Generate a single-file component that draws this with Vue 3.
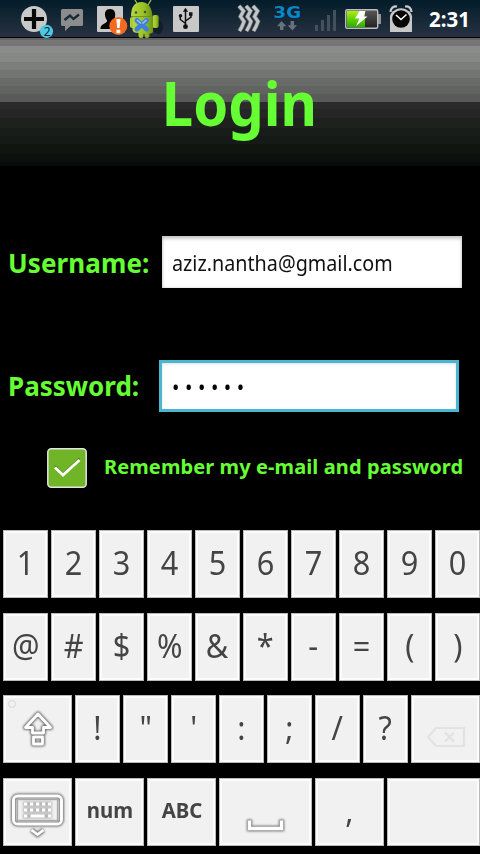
<script setup>
import { ref } from 'vue'

const username = ref('aziz.nantha@gmail.com')
const password = ref('••••••')
const remember = ref(true)

const digits = '1234567890'.split('')
const symbols = ['@', '#', '$', '%', '&', '*', '-', '=', '(', ')']
const punctuation = ['!', '"', "'", ':', ';', '/', '?']
</script>

<template>
  <main class="screen">
    <header class="status">
      <svg class="i-plus" width="34" height="38" viewBox="20 0 34 38">
        <circle cx="34" cy="19" r="13" fill="#c9c9c9" />
        <path d="M34 9v20M24 19h20" stroke="#080808" stroke-width="4.200" />
        <circle cx="46.500" cy="31.300" r="6.600" fill="#4bc9e5" />
        <text x="47.300" y="35.800" text-anchor="middle" font-size="12" fill="#102832">2</text>
      </svg>
      <svg class="i-msg" width="24" height="38" viewBox="60 0 24 38">
        <path d="M62.500 9h19q1.500 0 1.500 1.500v14q0 1.500-1.500 1.500h-11l-5.500 5v-5h-2.500q-1.500 0-1.500-1.500v-14q0-1.500 1.500-1.500z" fill="#8c8c8c" />
        <path d="M64.500 20l5.500-4.500 3.500 3.500 5.500-4.500" fill="none" stroke="#172a37" stroke-width="2.400" />
      </svg>
      <svg class="i-contact" width="31" height="38" viewBox="97 0 31 38">
        <rect x="97" y="6" width="26" height="26" rx="1" fill="#c8c8c8" />
        <path d="M110 9c-4 0-5.200 3-5 6 .2 3 1.500 4.500 2.200 6-.4 2.500-6.800 2.500-6.800 8h20c0-5.500-6.500-5.500-7.200-8 .8-1.500 2-3 2-6 .2-3-1.200-6-5.200-6z" fill="#050505" />
        <circle cx="118.300" cy="26" r="9" fill="#f46b20" />
        <path d="M116.300 19h4.200l-.9 9h-2.400zM116.500 29.700h3.800v3.500h-3.800z" fill="#fff" />
      </svg>
      <svg class="i-droid" width="34" height="38" viewBox="129 0 34 38">
        <defs>
          <linearGradient id="droid" x1="0" x2="1"><stop stop-color="#b8d846" /><stop offset=".6" stop-color="#98c024" /><stop offset="1" stop-color="#6a9216" /></linearGradient>
        </defs>
        <ellipse cx="158" cy="27" rx="5" ry="7" fill="#07131a" opacity=".55" />
        <path d="M135 0l3 5M151 0l-3 5" stroke="#9fbe45" stroke-width="1.300" />
        <g fill="url(#droid)">
          <path d="M131 16.500q0-14.500 10.500-14.500 9.500 0 11 14z" />
          <rect x="130" y="17" width="4.500" height="11" rx="2" />
          <rect x="152.500" y="15" width="6.200" height="13" rx="2.300" />
          <path d="M132.500 16.500h20.500v14.500q0 2.500-3 2.500h-.5v2q0 2.500-2.500 2.500t-2.500-2.500v-1.500h-1v1.500q0 2.500-2.500 2.500t-2.500-2.500v-2.500q-6 0-6-3.500z" />
        </g>
        <path d="M131.500 16.700h21" stroke="#789c26" />
        <circle cx="136" cy="12.500" r="1.300" fill="#49532a" />
        <circle cx="145" cy="12" r="1.300" fill="#49532a" />
        <path d="M137 20.500l9.500 8.500M146.500 20.500L137 29" stroke="#3f80dc" stroke-width="5" stroke-linecap="round" fill="none" />
        <path d="M138.500 25h6.500" stroke="#3f80dc" stroke-width="5" />
        <path d="M137 20l4 3.500M146.500 20l-4 3.500" stroke="#9bc5f5" stroke-width="1.600" />
      </svg>
      <svg class="i-usb" width="26" height="38" viewBox="173 0 26 38">
        <rect x="173" y="6" width="26" height="26" rx="1" fill="#c8c8c8" />
        <path d="M185.500 11v15M185.500 23.500l-5.200-4v-3M185.500 21l5.500-4v-3" fill="none" stroke="#111" stroke-width="1.500" />
        <path d="M185.500 7.800l2.600 4h-5.200zM189 12.300h3.500v3.500H189z" fill="#111" />
        <circle cx="180.500" cy="15.700" r="1.800" fill="#111" /><circle cx="185.500" cy="26.700" r="2.400" fill="#111" />
      </svg>
      <svg class="i-vibrate" width="24" height="38" viewBox="237 0 24 38">
        <g fill="none" stroke="#67727a" stroke-width="4.400">
          <path d="M239 6l4.500 5-3 5.500 3.500 5-2 5-2.500 4.500" />
          <path d="M246 6l4.500 5-3 5.500 3.500 5-2 5-2.500 4.500" />
          <path d="M253 6l4.500 5-3 5.500 3.500 5-2 5-2.500 4.500" />
        </g>
        <g fill="none" stroke="#c5c5c5" stroke-width="3">
          <path d="M239 6l4.500 5-3 5.500 3.500 5-2 5-2.500 4.500" />
          <path d="M246 6l4.500 5-3 5.500 3.500 5-2 5-2.500 4.500" />
          <path d="M253 6l4.500 5-3 5.500 3.500 5-2 5-2.500 4.500" />
        </g>
      </svg>
      <div class="network">
        <b>3G</b>
        <svg width="22" height="10" viewBox="276 21 22 10">
          <path d="M281.500 21l5 5.200h-3v3.800h-3.500v-3.800h-3zM292.500 30.500l-5-5.200h3V21h3.500v4.300h3z" fill="#65717b" />
        </svg>
      </div>
      <svg class="i-signal" width="22" height="38" viewBox="314 0 22 38">
        <path d="M315 25h3v6h-3zM321 20h3v11h-3zM327 15h3v16h-3zM333 10h3v21h-3z" fill="#44515c" />
      </svg>
      <svg class="i-battery" width="37" height="38" viewBox="345 0 37 38">
        <defs>
          <linearGradient id="charge" x2="0" y2="1"><stop stop-color="#b1ed16" /><stop offset=".5" stop-color="#62d100" /><stop offset="1" stop-color="#2aae00" /></linearGradient>
          <linearGradient id="empty" x2="0" y2="1"><stop stop-color="#5a5a5a" /><stop offset="1" stop-color="#202020" /></linearGradient>
        </defs>
        <rect x="377" y="14" width="4" height="10" fill="#929292" />
        <rect x="345.700" y="9.700" width="32" height="18.600" rx="1.500" fill="url(#empty)" stroke="#bdbdbd" stroke-width="1.400" />
        <path d="M347 11h18v16h-18z" fill="url(#charge)" />
        <path d="M359.500 11h6l-2 5.500h4L356 26l3.500-7.500h-4.500z" fill="#fff" />
      </svg>
      <svg class="i-alarm" width="24" height="38" viewBox="389 0 24 38">
        <path d="M390 32V19q-.5-5 3-8h16q3.500 3 3 8v13z" fill="#c8c8c8" />
        <path d="M390.500 12q.5-6 6.500-5.500M411.500 12q-.5-6-6.500-5.500" fill="none" stroke="#c8c8c8" stroke-width="2.200" />
        <circle cx="401" cy="19" r="10.800" fill="#c8c8c8" /><circle cx="401" cy="19" r="8.800" fill="#070707" />
        <path d="M396 15l5 4.500 5.500-5" stroke="#fff" stroke-width="1.500" fill="none" />
      </svg>
      <time>2:31</time>
    </header>

    <section class="banner"><h1>Login</h1></section>

    <form class="login" @submit.prevent>
      <div class="field user">
        <label for="user">Username:</label>
        <div class="box"><input id="user" v-model="username" type="text" /></div>
      </div>
      <div class="field pass">
        <label for="pass">Password:</label>
        <div class="box"><input id="pass" v-model="password" type="text" /></div>
      </div>
      <div class="remember" @click="remember = !remember">
        <svg width="40" height="40" viewBox="0 0 40 40">
          <rect x=".8" y=".8" width="38.400" height="38.400" rx="3.500" fill="#70b528" stroke="#e4e4e4" stroke-width="1.500" />
          <g v-if="remember" fill="none">
            <path d="M8 18l8 8L32.500 10.500" stroke="#4d821b" stroke-width="2" />
            <path d="M8 19.500l8 7.500L32.500 12" stroke="#fff" stroke-width="2.800" />
          </g>
        </svg>
        <span>Remember my e-mail and password</span>
      </div>
    </form>

    <section class="keyboard">
      <div class="row"><button v-for="k in digits" :key="k"><span>{{ k }}</span></button></div>
      <div class="row"><button v-for="k in symbols" :key="k"><span>{{ k }}</span></button></div>
      <div class="row thirds">
        <button class="icon">
          <svg width="69" height="68" viewBox="3 695 69 68">
            <circle cx="12" cy="704" r="3.300" fill="none" stroke="#dedede" stroke-width="1.300" />
            <g fill="none" stroke-linejoin="round">
              <path class="glow" d="M38 714l-12.500 13.500h7v5.500h11v-5.500h7zM33.500 737h9v7h-9z" stroke="#707070" stroke-width="5" />
              <path d="M38 714l-12.500 13.500h7v5.500h11v-5.500h7zM33.500 737h9v7h-9z" stroke="#fff" stroke-width="2.800" />
            </g>
          </svg>
        </button>
        <button v-for="k in punctuation" :key="k"><span>{{ k }}</span></button>
        <button class="icon">
          <svg width="69" height="68" viewBox="411 695 69 68">
            <path d="M428 737l8-9h28v18h-28zM445 732.500l9 9M454 732.500l-9 9" fill="none" stroke="#e2e2e2" stroke-width="2.200" />
          </svg>
        </button>
      </div>
      <div class="row bottom">
        <button class="icon">
          <svg width="69" height="68" viewBox="3 777.500 69 68">
            <rect class="glow" x="13.500" y="795.500" width="48" height="28" rx="4" fill="none" stroke="#707070" stroke-width="5" />
            <rect x="13.500" y="795.500" width="48" height="28" rx="4" fill="none" stroke="#fff" stroke-width="2.900" />
            <rect x="17.500" y="799" width="40" height="21" fill="none" stroke="#aaa" stroke-width="1.300" />
            <path class="glow" d="M23 803.500h29M23 809.500h29M23 815.500h29" stroke="#b5b5b5" stroke-width="5" />
            <path d="M24 803.500h29M24 809.500h29" stroke="#fff" stroke-width="3.200" stroke-dasharray="3.200 2.800" />
            <path d="M24 815.500h3.200M30.500 815.500h14M48 815.500h3.200" stroke="#fff" stroke-width="3" />
            <path class="glow" d="M31.500 829.500l6 4.500 6-4.500" fill="none" stroke="#707070" stroke-width="5" />
            <path d="M31.500 829.500l6 4.500 6-4.500" fill="none" stroke="#fff" stroke-width="2.800" />
          </svg>
        </button>
        <button class="word"><span>num</span></button>
        <button class="word"><span>ABC</span></button>
        <button class="icon">
          <svg width="93" height="68" viewBox="219 777.500 93 68">
            <path class="glow" d="M249.500 819v9h32v-9" fill="none" stroke="#707070" stroke-width="5.300" />
            <path d="M249.500 820v8h32v-8" fill="none" stroke="#fff" stroke-width="3.400" />
          </svg>
        </button>
        <button><span>,</span></button>
        <button aria-label="Enter"></button>
      </div>
    </section>
  </main>
</template>

<style>
body { margin: 0; background: #000; overflow: hidden; }
</style>

<style scoped>
.screen { width: 480px; height: 854px; overflow: hidden; background: #000; display: flex; flex-direction: column; font-family: "Noto Sans", "Open Sans", sans-serif; }
svg { display: block; flex: none; overflow: visible; }
.glow { filter: blur(.8px); }
.status { height: 37px; flex: none; display: flex; padding-left: 20px; border-bottom: 1px solid #000; background: linear-gradient(#031c29, #162735 50%, #273142); }
.i-msg { margin-left: 6px; }
.i-contact { margin-left: 13px; }
.i-droid { margin-left: 1px; }
.i-usb { margin-left: 10px; }
.i-vibrate { margin-left: 38px; }
.network { width: 28px; margin-left: 12px; display: flex; flex-direction: column; align-items: center; }
.network b { height: 21px; font: bold 16px/26px "DejaVu Sans", sans-serif; color: #0787cc; transform: scaleX(1.150); }
.i-signal { margin-left: 13px; }
.i-battery { margin-left: 9px; }
.i-alarm { margin-left: 7px; }
time { margin-left: 16px; color: #fff; font-size: 20.5px; font-weight: 700; line-height: 39px; }
.banner { height: 128px; flex: none; display: flex; justify-content: center; background: linear-gradient(#646464 0 2px, #767676 2px 8px, #8b8b8b 8px 15px, #858885 15px 24px, #7c7e7c 24px 32px, #737573 32px 40px, #696b69 40px 48px, #626462 48px 56px, #595b59 56px 64px, #2b2b2b 64px 71px, #252625 71px 80px, #1f211f 80px 90px, #191d19 90px 98px, #161a16 98px 106px, #101510 106px 116px, #0c100c 116px 124px, #080b08 124px 128px); }
h1 { margin: 0; padding-right: 2px; color: #66ff33; font-size: 61px; font-weight: 700; line-height: 129px; white-space: nowrap; transform: scaleX(.92); }
.login { height: 364px; flex: none; }
.field { display: flex; align-items: center; height: 52px; }
.user { padding: 70px 0 0 8px; }
.pass { padding: 72px 0 0 8px; }
label { flex: none; color: #66ff33; font-size: 26px; font-weight: 700; line-height: 52px; white-space: nowrap; }
.user label { width: 154px; letter-spacing: .1px; padding-top: 2px; line-height: 50px; }
.pass label { width: 151px; }
.box { box-sizing: border-box; width: 300px; height: 52px; padding-left: 10px; background: #fff; box-shadow: inset 0 3px 4px -1px #bbb, inset 0 0 3px #ccc; }
.pass .box { border: 3px solid #4bb6d2; box-shadow: inset 0 1px 3px #ddd; }
input { display: block; box-sizing: border-box; width: 290px; height: 52px; margin: 0; padding: 1px 0 0; border: 0; outline: 0; color: #111; background: transparent; font: 21px/51px "Noto Sans", sans-serif; transform: scaleX(.94); transform-origin: left; }
.pass input { width: 270px; height: 46px; line-height: 45px; letter-spacing: 5.900px; color: #000; }
.remember { display: flex; align-items: center; height: 40px; padding: 36px 0 0 47px; color: #66ff33; font-size: 20px; font-weight: 700; white-space: nowrap; }
.remember span { margin-left: 17px; line-height: 36px; padding-bottom: 2px; letter-spacing: .1px; }
.keyboard { padding-left: 3px; display: flex; flex-direction: column; gap: 14.5px; }
.row { display: grid; grid-template-columns: repeat(10, 45px); gap: 3px; height: 68px; }
.thirds { grid-template-columns: 69px repeat(7, 45px) 69px; }
.bottom { grid-template-columns: 69px 69px 69px 93px 69px 93px; }
button { min-width: 0; height: 68px; box-sizing: border-box; margin: 0; padding: 0; display: flex; align-items: center; justify-content: center; border: 1px solid #b9bbb9; border-radius: 0; background: #f1f1f1; box-shadow: inset 0 0 0 2px #fcfcfc; color: #444; font: 33px/60px "Noto Sans", sans-serif; }
button span { display: block; padding-bottom: 2px; transform: scaleX(.93); }
.icon { overflow: hidden; }
.word { font-size: 21px; font-weight: 700; }
.word span { padding-bottom: 3px; transform: scaleX(.97); }
</style>
